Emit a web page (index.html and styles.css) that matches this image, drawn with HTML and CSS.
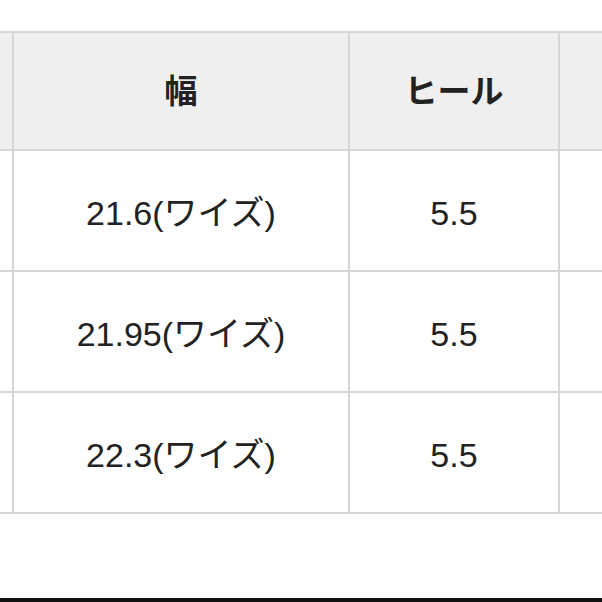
FILE: index.html
```html
<!DOCTYPE html>
<html lang="ja">
<head>
<meta charset="utf-8">
<link rel="stylesheet" href="styles.css">
</head>
<body>
<div class="page">
  <div class="table-wrap">
    <table class="size-table">
      <colgroup>
        <col class="c-edge">
        <col class="c-width">
        <col class="c-heel">
        <col class="c-next">
      </colgroup>
      <thead>
        <tr class="head-row">
          <th></th>
          <th>幅</th>
          <th>ヒール</th>
          <th></th>
        </tr>
      </thead>
      <tbody>
        <tr class="row">
          <td></td>
          <td>21.6(ワイズ)</td>
          <td>5.5</td>
          <td></td>
        </tr>
        <tr class="row">
          <td></td>
          <td>21.95(ワイズ)</td>
          <td>5.5</td>
          <td></td>
        </tr>
        <tr class="row">
          <td></td>
          <td>22.3(ワイズ)</td>
          <td>5.5</td>
          <td></td>
        </tr>
      </tbody>
    </table>
  </div>
  <div class="bottom-bar"></div>
</div>
</body>
</html>
```

FILE: styles.css
```css
html, body {
  margin: 0;
  padding: 0;
  background: #ffffff;
}

body {
  width: 602px;
  height: 602px;
  overflow: hidden;
  font-family: "Liberation Sans", "Noto Sans CJK JP", sans-serif;
  color: #222222;
}

.page {
  display: flex;
  flex-direction: column;
  height: 602px;
}

.table-wrap {
  padding-top: 31px;
  overflow: hidden;
}

.size-table {
  border-collapse: collapse;
  table-layout: fixed;
  width: 720px;
}

.c-edge { width: 13px; }
.c-width { width: 336px; }
.c-heel { width: 210px; }
.c-next { width: 161px; }

.size-table th,
.size-table td {
  border: 2px solid #d6d6d6;
  text-align: center;
  vertical-align: middle;
  padding: 0;
  font-size: 33px;
  line-height: 1;
}

.size-table th:first-child,
.size-table td:first-child {
  border-left: none;
}

.head-row th {
  background: #efefef;
  height: 116px;
  font-weight: bold;
}

.row td {
  height: 115px;
  font-size: 34px;
  font-weight: normal;
  padding-top: 4px;
}

.bottom-bar {
  margin-top: auto;
  height: 4px;
  background: #111111;
}
```
